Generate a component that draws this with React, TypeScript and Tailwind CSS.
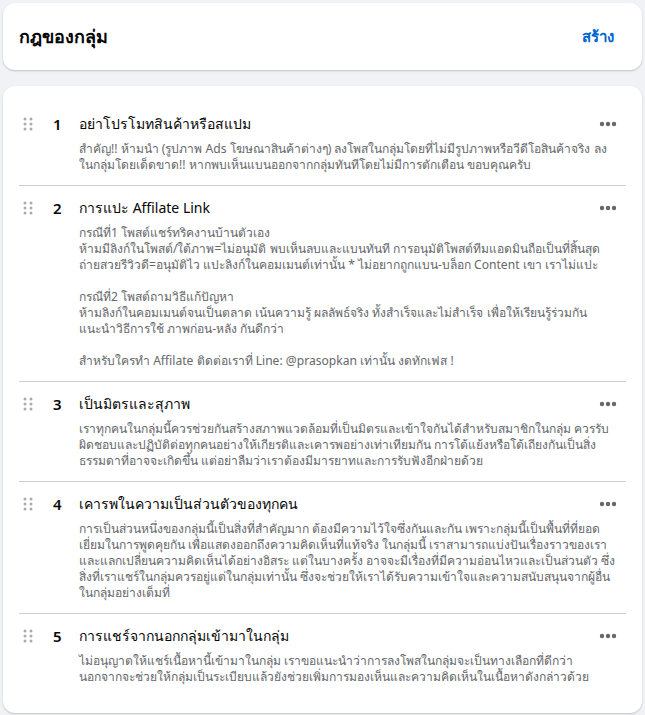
const rules = [
  {
    n: 1,
    title: "อย่าโปรโมทสินค้าหรือสแปม",
    lines: [
      "สำคัญ!! ห้ามนำ (รูปภาพ Ads โฆษณาสินค้าต่างๆ) ลงโพสในกลุ่มโดยที่ไม่มีรูปภาพหรือวีดีโอสินค้าจริง ลง",
      "ในกลุ่มโดยเด็ดขาด!! หากพบเห็นแบนออกจากกลุ่มทันทีโดยไม่มีการตักเตือน ขอบคุณครับ",
    ],
  },
  {
    n: 2,
    title: "การแปะ Affilate Link",
    lines: [
      "กรณีที่1 โพสต์แชร์ทริคงานบ้านตัวเอง",
      "ห้ามมีลิงก์ในโพสต์/ใต้ภาพ=ไม่อนุมัติ พบเห็นลบและแบนทันที การอนุมัติโพสต์ทีมแอดมินถือเป็นที่สิ้นสุด",
      "ถ่ายสวยรีวิวดี=อนุมัติไว แปะลิงก์ในคอมเมนต์เท่านั้น * ไม่อยากถูกแบน-บล็อก Content เขา เราไม่แปะ",
      "",
      "กรณีที่2 โพสต์ถามวิธีแก้ปัญหา",
      "ห้ามลิงก์ในคอมเมนต์จนเป็นตลาด เน้นความรู้ ผลลัพธ์จริง ทั้งสำเร็จและไม่สำเร็จ เพื่อให้เรียนรู้ร่วมกัน",
      "แนะนำวิธีการใช้ ภาพก่อน-หลัง กันดีกว่า",
      "",
      "สำหรับใครทำ Affilate ติดต่อเราที่ Line: @prasopkan เท่านั้น งดทักเฟส !",
    ],
  },
  {
    n: 3,
    title: "เป็นมิตรและสุภาพ",
    lines: [
      "เราทุกคนในกลุ่มนี้ควรช่วยกันสร้างสภาพแวดล้อมที่เป็นมิตรและเข้าใจกันได้สำหรับสมาชิกในกลุ่ม ควรรับ",
      "ผิดชอบและปฏิบัติต่อทุกคนอย่างให้เกียรติและเคารพอย่างเท่าเทียมกัน การโต้แย้งหรือโต้เถียงกันเป็นสิ่ง",
      "ธรรมดาที่อาจจะเกิดขึ้น แต่อย่าลืมว่าเราต้องมีมารยาทและการรับฟังอีกฝ่ายด้วย",
    ],
  },
  {
    n: 4,
    title: "เคารพในความเป็นส่วนตัวของทุกคน",
    lines: [
      "การเป็นส่วนหนึ่งของกลุ่มนี้เป็นสิ่งที่สำคัญมาก ต้องมีความไว้ใจซึ่งกันและกัน เพราะกลุ่มนี้เป็นพื้นที่ที่ยอด",
      "เยี่ยมในการพูดคุยกัน เพื่อแสดงออกถึงความคิดเห็นที่แท้จริง ในกลุ่มนี้ เราสามารถแบ่งปันเรื่องราวของเรา",
      "และแลกเปลี่ยนความคิดเห็นได้อย่างอิสระ แต่ในบางครั้ง อาจจะมีเรื่องที่มีความอ่อนไหวและเป็นส่วนตัว ซึ่ง",
      "สิ่งที่เราแชร์ในกลุ่มควรอยู่แต่ในกลุ่มเท่านั้น ซึ่งจะช่วยให้เราได้รับความเข้าใจและความสนับสนุนจากผู้อื่น",
      "ในกลุ่มอย่างเต็มที่",
    ],
  },
  {
    n: 5,
    title: "การแชร์จากนอกกลุ่มเข้ามาในกลุ่ม",
    lines: [
      "ไม่อนุญาตให้แชร์เนื้อหานี้เข้ามาในกลุ่ม เราขอแนะนำว่าการลงโพสในกลุ่มจะเป็นทางเลือกที่ดีกว่า",
      "นอกจากจะช่วยให้กลุ่มเป็นระเบียบแล้วยังช่วยเพิ่มการมองเห็นและความคิดเห็นในเนื้อหาดังกล่าวด้วย",
    ],
  },
];

const DragHandle = () => (
  <svg width="10" height="14" viewBox="0 0 10 14" fill="#a8abaf">
    <circle cx="2" cy="2" r="1.5" />
    <circle cx="8" cy="2" r="1.5" />
    <circle cx="2" cy="7" r="1.5" />
    <circle cx="8" cy="7" r="1.5" />
    <circle cx="2" cy="12" r="1.5" />
    <circle cx="8" cy="12" r="1.5" />
  </svg>
);

const MoreDots = () => (
  <svg width="18" height="6" viewBox="0 0 18 6" fill="#65676b">
    <circle cx="3" cy="3" r="2.2" />
    <circle cx="9" cy="3" r="2.2" />
    <circle cx="15" cy="3" r="2.2" />
  </svg>
);

interface RuleProps {
  n: number;
  title: string;
  lines: string[];
  last: boolean;
}

const RuleRow = ({ n, title, lines, last }: RuleProps) => (
  <div className={`flex py-3 ${last ? "" : "border-b border-[#ced0d4]"}`}>
    <div className="flex h-5 w-[24px] items-center pl-1">
      <DragHandle />
    </div>
    <div className="h-5 w-[36px] pl-[10px] text-[15px] font-semibold leading-5 text-[#050505]">
      {n}
    </div>
    <div className="min-w-0 flex-1">
      <div className="flex h-5 items-center justify-between">
        <span className="text-[14px] leading-5 text-[#050505]">{title}</span>
        <button className="flex h-5 w-9 items-center justify-center">
          <MoreDots />
        </button>
      </div>
      <div className="mt-[7px] text-[12.1px] leading-4 text-[#65676b]">
        {lines.map((line, i) => (
          <div key={i} className="h-4 whitespace-nowrap">
            {line}
          </div>
        ))}
      </div>
    </div>
  </div>
);

export default function App() {
  return (
    <div
      className="min-h-[715px] bg-[#f0f2f5] p-[3px]"
      style={{ fontFamily: '"Noto Sans", "Liberation Sans", sans-serif' }}
    >
      <div className="flex flex-col gap-4">
        <div className="flex h-[67px] items-center justify-between rounded-xl bg-white pl-4 pr-7 shadow-[0_1px_2px_rgba(0,0,0,0.2)]">
          <h1 className="text-[18px] font-bold text-[#050505]">กฎของกลุ่ม</h1>
          <button className="text-[15px] font-semibold text-[#0064d1]">สร้าง</button>
        </div>
        <div className="rounded-xl bg-white px-4 py-4 shadow-[0_1px_2px_rgba(0,0,0,0.2)]">
          {rules.map((r, i) => (
            <RuleRow key={r.n} {...r} last={i === rules.length - 1} />
          ))}
        </div>
      </div>
    </div>
  );
}
